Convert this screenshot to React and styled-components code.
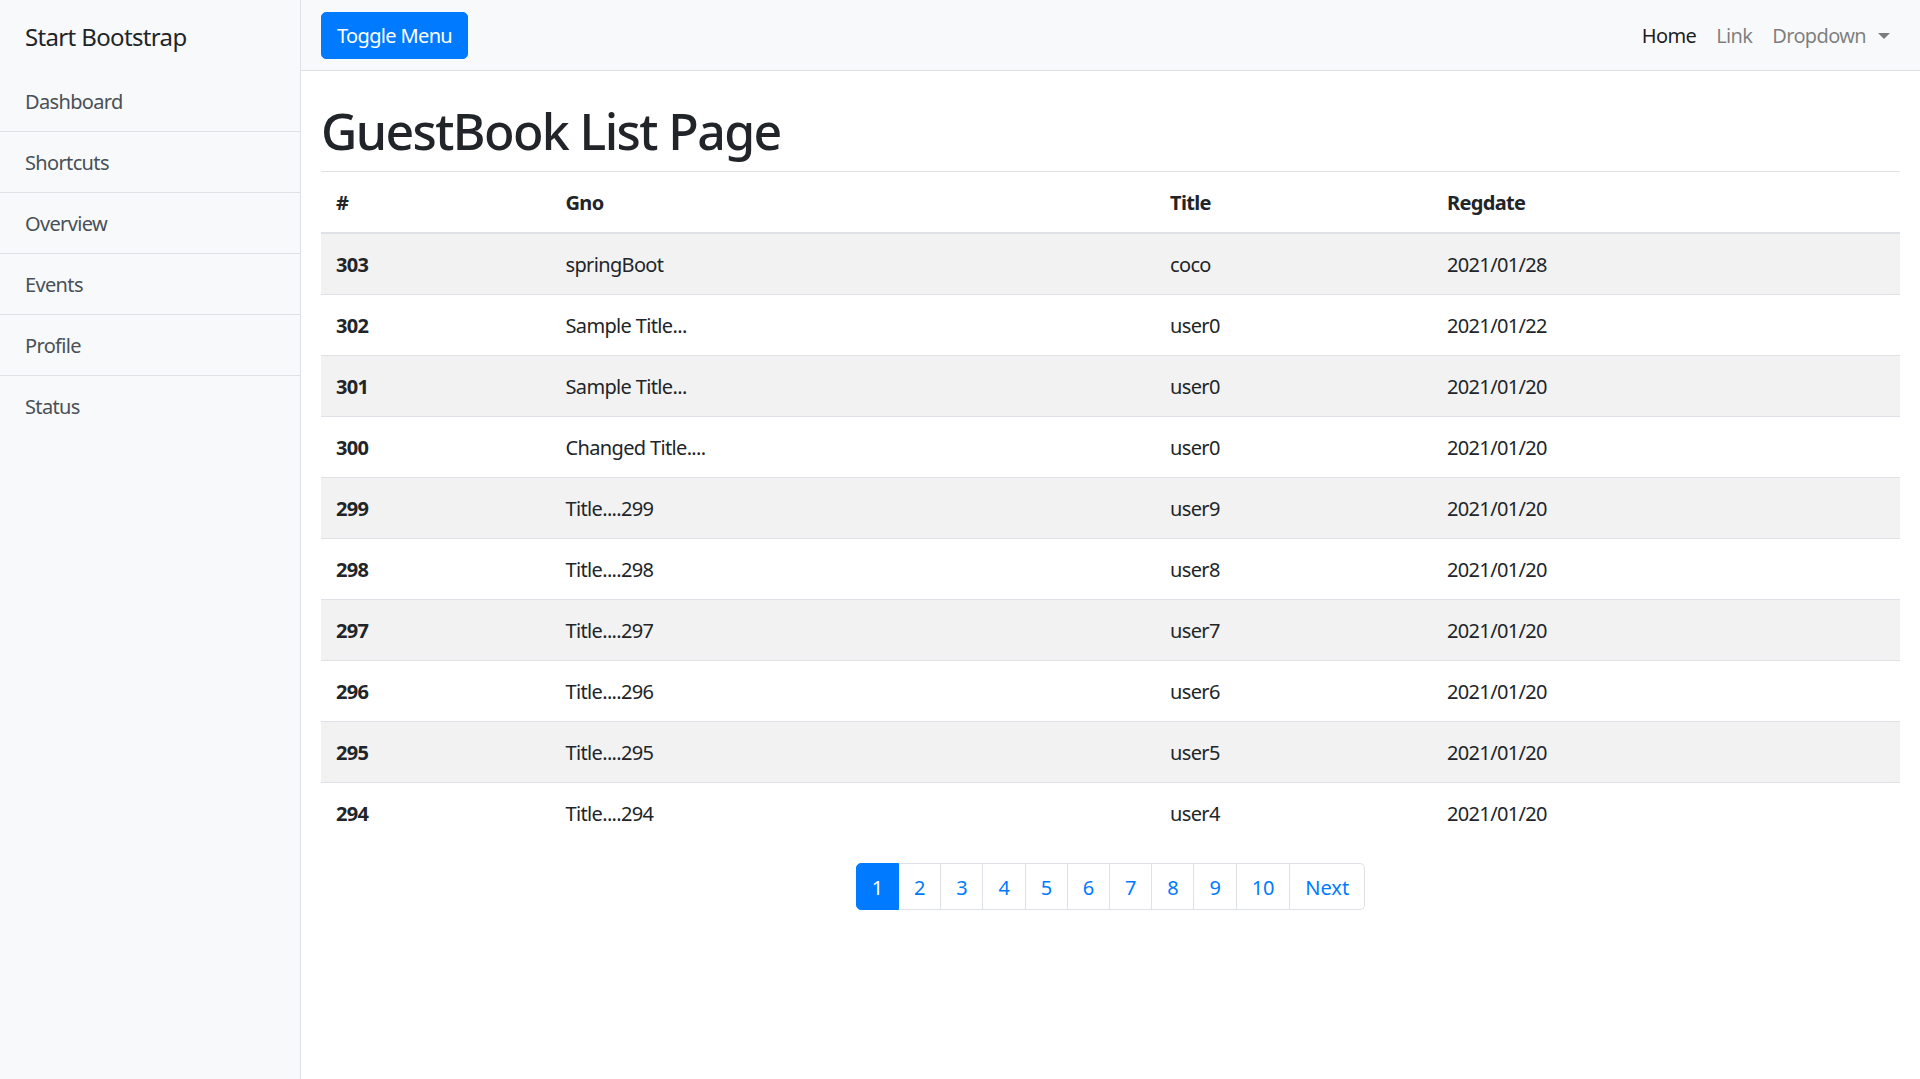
import React from 'react';
import styled, { createGlobalStyle } from 'styled-components';

const GlobalStyle = createGlobalStyle`
  html, body {
    margin: 0;
    padding: 0;
    background: #fff;
  }
  body {
    font-family: "Noto Sans", "Open Sans", "Liberation Sans", sans-serif;
    font-size: 20px;
    line-height: 1.5;
    color: #212529;
    letter-spacing: -0.65px;
  }
  * {
    box-sizing: border-box;
  }
`;

const Wrapper = styled.div`
  display: flex;
  min-height: 100vh;
`;

const Sidebar = styled.aside`
  width: 301px;
  flex-shrink: 0;
  background-color: #f8f9fa;
  border-right: 1px solid #dee2e6;
`;

const SidebarHeading = styled.div`
  padding: 18.5px 25px 16.5px;
  font-size: 24px;
  line-height: 1.5;
  height: 71px;
`;

const SidebarList = styled.div`
  display: flex;
  flex-direction: column;
`;

const SidebarItem = styled.a`
  display: block;
  padding: 16px 25px 14px;
  line-height: 30px;
  color: #495057;
  text-decoration: none;
  border-top: 1.25px solid #dee2e6;
  &:first-child {
    border-top: none;
  }
`;

const Main = styled.div`
  flex: 1;
  min-width: 0;
`;

const Navbar = styled.nav`
  display: flex;
  align-items: center;
  justify-content: space-between;
  height: 71px;
  padding: 1px 20px 0;
  background-color: #f8f9fa;
  border-bottom: 1px solid #dee2e6;
`;

const ToggleButton = styled.button`
  font-family: inherit;
  letter-spacing: inherit;
  font-size: 20px;
  line-height: 30px;
  padding: 8px 15px 7px;
  color: #fff;
  background-color: #007bff;
  border: 1.25px solid #007bff;
  border-radius: 5px;
  cursor: pointer;
`;

const NavLinks = styled.ul`
  display: flex;
  align-items: center;
  list-style: none;
  margin: 0;
  padding: 0;
`;

const NavLink = styled.a`
  display: flex;
  align-items: center;
  padding: 10px 10px;
  line-height: 30px;
  text-decoration: none;
  color: ${(p) => (p.$active ? 'rgba(0,0,0,0.9)' : 'rgba(0,0,0,0.5)')};
`;

const Caret = styled.span`
  display: inline-block;
  margin-left: 12px;
  width: 0;
  height: 0;
  border-top: 6px solid rgba(0, 0, 0, 0.5);
  border-left: 6px solid transparent;
  border-right: 6px solid transparent;
`;

const Container = styled.div`
  padding: 0 20px;
`;

const Title = styled.h1`
  font-size: 50px;
  font-weight: 500;
  line-height: 1.2;
  letter-spacing: -1.6px;
  margin: 30px 0 10px;
`;

const Table = styled.table`
  width: 100%;
  border-collapse: collapse;
  margin-bottom: 20px;
  color: #212529;
`;

const HeadCell = styled.th`
  text-align: left;
  font-weight: 700;
  padding: 16px 15px 14px;
  line-height: 30px;
  border-top: 1.25px solid #dee2e6;
  border-bottom: 2.5px solid #dee2e6;
  width: ${(p) => p.$w || 'auto'};
`;

const Row = styled.tr`
  background-color: ${(p) => (p.$striped ? 'rgba(0,0,0,0.05)' : 'transparent')};
`;

const Cell = styled.td`
  padding: 16px 15px 14px;
  line-height: 30px;
  border-top: 1.25px solid #dee2e6;
  font-weight: ${(p) => (p.$bold ? 700 : 400)};
`;

const Pagination = styled.ul`
  display: flex;
  justify-content: center;
  list-style: none;
  margin: 0;
  padding: 0;
  letter-spacing: 0;
`;

const PageLink = styled.a`
  display: block;
  padding: 11px 15px 9px;
  line-height: 25px;
  margin-left: -1.25px;
  text-decoration: none;
  color: ${(p) => (p.$active ? '#fff' : '#007bff')};
  background-color: ${(p) => (p.$active ? '#007bff' : '#fff')};
  border: 1.25px solid ${(p) => (p.$active ? '#007bff' : '#dee2e6')};
  position: relative;
  z-index: ${(p) => (p.$active ? 1 : 0)};
  li:first-child > & {
    margin-left: 0;
    border-radius: 5px 0 0 5px;
  }
  li:last-child > & {
    border-radius: 0 5px 5px 0;
  }
`;

const menu = ['Dashboard', 'Shortcuts', 'Overview', 'Events', 'Profile', 'Status'];

const rows = [
  [303, 'springBoot', 'coco', '2021/01/28'],
  [302, 'Sample Title...', 'user0', '2021/01/22'],
  [301, 'Sample Title...', 'user0', '2021/01/20'],
  [300, 'Changed Title....', 'user0', '2021/01/20'],
  [299, 'Title....299', 'user9', '2021/01/20'],
  [298, 'Title....298', 'user8', '2021/01/20'],
  [297, 'Title....297', 'user7', '2021/01/20'],
  [296, 'Title....296', 'user6', '2021/01/20'],
  [295, 'Title....295', 'user5', '2021/01/20'],
  [294, 'Title....294', 'user4', '2021/01/20'],
];

const pages = ['1', '2', '3', '4', '5', '6', '7', '8', '9', '10', 'Next'];

const App = () => {
  return (
    <>
      <GlobalStyle />
      <Wrapper>
        <Sidebar>
          <SidebarHeading>Start Bootstrap</SidebarHeading>
          <SidebarList>
            {menu.map((m) => (
              <SidebarItem key={m} href="#">{m}</SidebarItem>
            ))}
          </SidebarList>
        </Sidebar>
        <Main>
          <Navbar>
            <ToggleButton>Toggle Menu</ToggleButton>
            <NavLinks>
              <li><NavLink $active href="#">Home</NavLink></li>
              <li><NavLink href="#">Link</NavLink></li>
              <li><NavLink href="#">Dropdown<Caret /></NavLink></li>
            </NavLinks>
          </Navbar>
          <Container>
            <Title>GuestBook List Page</Title>
            <Table>
              <thead>
                <tr>
                  <HeadCell $w="229.5px">#</HeadCell>
                  <HeadCell $w="604.5px">Gno</HeadCell>
                  <HeadCell $w="277px">Title</HeadCell>
                  <HeadCell>Regdate</HeadCell>
                </tr>
              </thead>
              <tbody>
                {rows.map((r, i) => (
                  <Row key={r[0]} $striped={i % 2 === 0}>
                    <Cell $bold>{r[0]}</Cell>
                    <Cell>{r[1]}</Cell>
                    <Cell>{r[2]}</Cell>
                    <Cell>{r[3]}</Cell>
                  </Row>
                ))}
              </tbody>
            </Table>
            <Pagination>
              {pages.map((p, i) => (
                <li key={p}>
                  <PageLink href="#" $active={i === 0}>{p}</PageLink>
                </li>
              ))}
            </Pagination>
          </Container>
        </Main>
      </Wrapper>
    </>
  );
};

export default App;
